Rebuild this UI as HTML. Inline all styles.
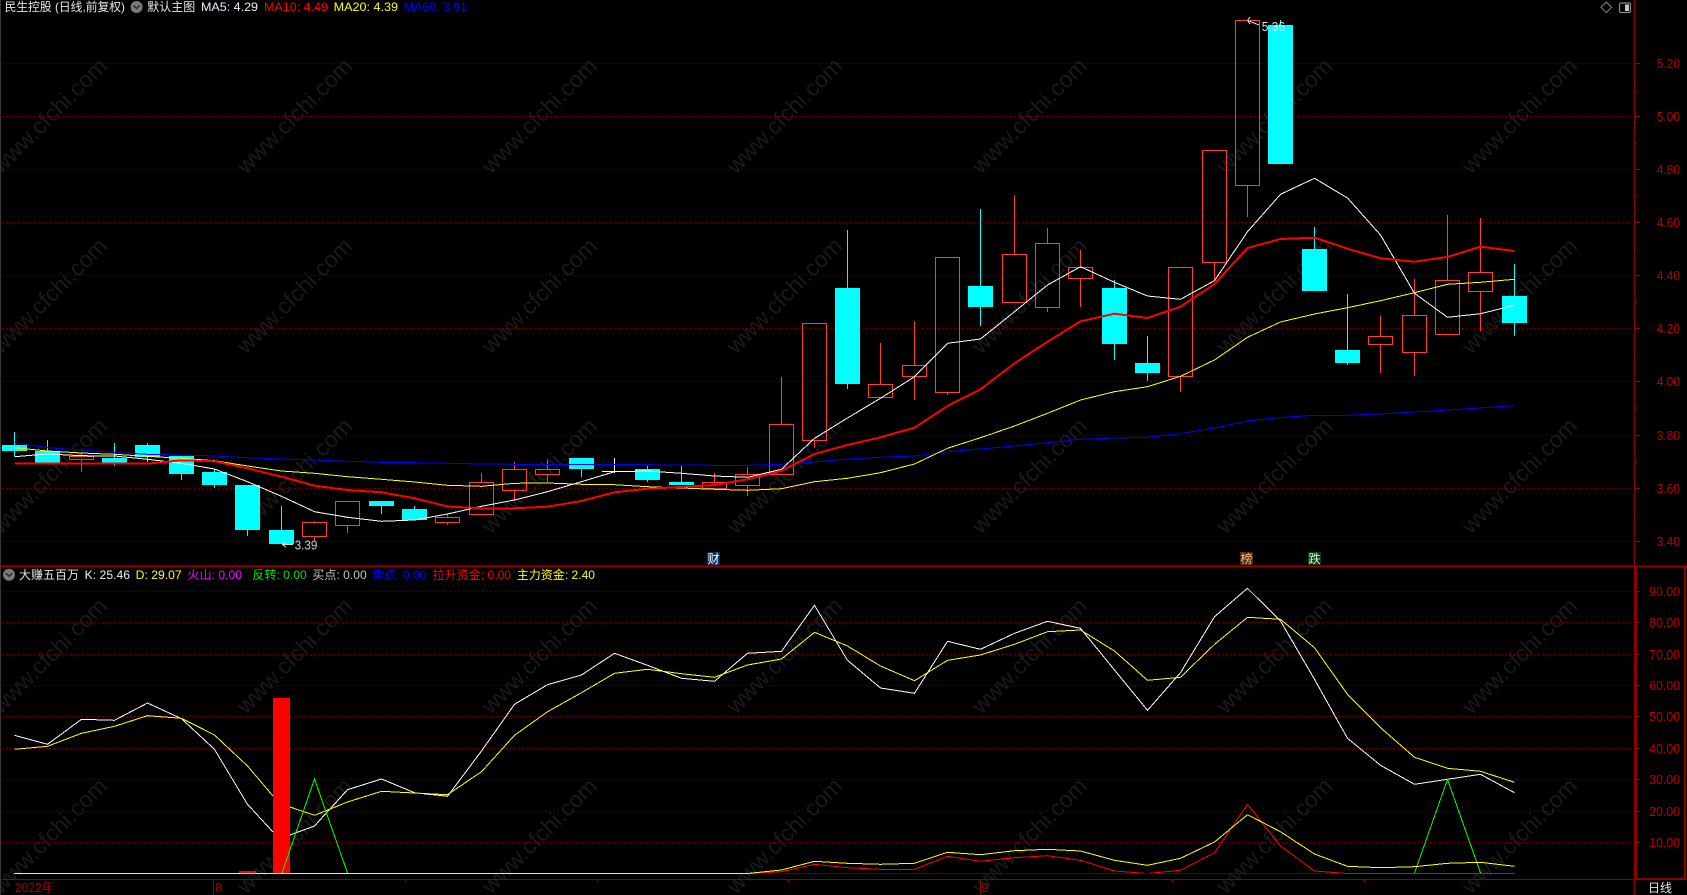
<!DOCTYPE html>
<html lang="zh-CN">
<head>
<meta charset="utf-8">
<title>民生控股</title>
<style>
html,body{margin:0;padding:0;background:#000;width:1687px;height:895px;overflow:hidden}
svg{display:block;position:absolute;left:0;top:0}
text{font-family:"Liberation Sans","Noto Sans CJK SC",sans-serif;font-size:12px}
.wm text{font-size:23px;fill:#1a1a1a}
.ax text{font-size:13px;fill:#bb0000}
</style>
</head>
<body>
<svg width="1687" height="895" viewBox="0 0 1687 895" xmlns="http://www.w3.org/2000/svg">
<rect width="1687" height="895" fill="#000"/>
<!-- watermark -->
<g class="wm">
<text transform="translate(1,175) rotate(-45)">www.cfchi.com</text>
<text transform="translate(246,175) rotate(-45)">www.cfchi.com</text>
<text transform="translate(491,175) rotate(-45)">www.cfchi.com</text>
<text transform="translate(736,175) rotate(-45)">www.cfchi.com</text>
<text transform="translate(981,175) rotate(-45)">www.cfchi.com</text>
<text transform="translate(1226,175) rotate(-45)">www.cfchi.com</text>
<text transform="translate(1471,175) rotate(-45)">www.cfchi.com</text>
<text transform="translate(1,355) rotate(-45)">www.cfchi.com</text>
<text transform="translate(246,355) rotate(-45)">www.cfchi.com</text>
<text transform="translate(491,355) rotate(-45)">www.cfchi.com</text>
<text transform="translate(736,355) rotate(-45)">www.cfchi.com</text>
<text transform="translate(981,355) rotate(-45)">www.cfchi.com</text>
<text transform="translate(1226,355) rotate(-45)">www.cfchi.com</text>
<text transform="translate(1471,355) rotate(-45)">www.cfchi.com</text>
<text transform="translate(1,535) rotate(-45)">www.cfchi.com</text>
<text transform="translate(246,535) rotate(-45)">www.cfchi.com</text>
<text transform="translate(491,535) rotate(-45)">www.cfchi.com</text>
<text transform="translate(736,535) rotate(-45)">www.cfchi.com</text>
<text transform="translate(981,535) rotate(-45)">www.cfchi.com</text>
<text transform="translate(1226,535) rotate(-45)">www.cfchi.com</text>
<text transform="translate(1471,535) rotate(-45)">www.cfchi.com</text>
<text transform="translate(1,715) rotate(-45)">www.cfchi.com</text>
<text transform="translate(246,715) rotate(-45)">www.cfchi.com</text>
<text transform="translate(491,715) rotate(-45)">www.cfchi.com</text>
<text transform="translate(736,715) rotate(-45)">www.cfchi.com</text>
<text transform="translate(981,715) rotate(-45)">www.cfchi.com</text>
<text transform="translate(1226,715) rotate(-45)">www.cfchi.com</text>
<text transform="translate(1471,715) rotate(-45)">www.cfchi.com</text>
<text transform="translate(1,895) rotate(-45)">www.cfchi.com</text>
<text transform="translate(246,895) rotate(-45)">www.cfchi.com</text>
<text transform="translate(491,895) rotate(-45)">www.cfchi.com</text>
<text transform="translate(736,895) rotate(-45)">www.cfchi.com</text>
<text transform="translate(981,895) rotate(-45)">www.cfchi.com</text>
<text transform="translate(1226,895) rotate(-45)">www.cfchi.com</text>
<text transform="translate(1471,895) rotate(-45)">www.cfchi.com</text>
</g>
<g shape-rendering="crispEdges">
<!-- grid -->
<path fill="none" stroke="#800000" stroke-width="1" stroke-dasharray="1 3" d="M2 63.5H1634M2 116.5H1634M2 169.5H1634M2 222.5H1634M2 275.5H1634M2 328.5H1634M2 381.5H1634M2 435.5H1634M2 488.5H1634M2 541.5H1634M2 591.5H1634M2 622.5H1634M2 654.5H1634M2 685.5H1634M2 716.5H1634M2 748.5H1634M2 779.5H1634M2 811.5H1634M2 842.5H1634"/>
<!-- frame -->
<rect x="0" y="0" width="1" height="895" fill="#3a3a3a"/>
<path fill="none" stroke="#8f0000" stroke-width="1" d="M1634.5 0V895M0 879.5H1687"/>
<rect x="0" y="565.5" width="1687" height="1.6" fill="#a00000"/>
<rect x="1636" y="566.5" width="49" height="312.5" fill="none" stroke="#8f0000" stroke-width="2"/>
<path fill="none" stroke="#8f0000" stroke-width="1" d="M1634 63.5H1640M1634 116.5H1640M1634 169.5H1640M1634 222.5H1640M1634 275.5H1640M1634 328.5H1640M1634 381.5H1640M1634 435.5H1640M1634 488.5H1640M1634 541.5H1640M1634 37.5H1637M1634 90.5H1637M1634 143.5H1637M1634 196.5H1637M1634 249.5H1637M1634 302.5H1637M1634 355.5H1637M1634 408.5H1637M1634 462.5H1637M1634 515.5H1637M1636 591.5H1640M1636 622.5H1640M1636 654.5H1640M1636 685.5H1640M1636 716.5H1640M1636 748.5H1640M1636 779.5H1640M1636 811.5H1640M1636 842.5H1640M1636 607.5H1638M1636 638.5H1638M1636 670.5H1638M1636 701.5H1638M1636 732.5H1638M1636 764.5H1638M1636 795.5H1638M1636 827.5H1638M1636 858.5H1638M213.5 879V895M980.5 879V895M405.5 879V882M597.5 879V882M788.5 879V882M1172.5 879V882M1364.5 879V882"/>
<!-- cyan wicks -->
<path fill="none" stroke="#00ffff" stroke-width="1" d="M14.5 432V445M14.5 451V456M47.5 440V451M114.5 443V458M114.5 463V466M147.5 443V445M147.5 457V462M181.5 474V480M214.5 469V472M214.5 485V488M247.5 530V536M281.5 506V530M381.5 506V514M414.5 506V509M581.5 469V477M647.5 466V469M647.5 480V482M681.5 466V482M847.5 230V288M847.5 384V389M980.5 209V286M980.5 307V326M1114.5 280V288M1114.5 344V360M1147.5 336V363M1147.5 373V381M1280.5 20V25M1314.5 227V249M1347.5 294V350M1347.5 363V365M1514.5 264V296M1514.5 323V336"/>
<!-- cyan bodies -->
<g fill="#00ffff">
<rect x="2" y="445" width="25" height="6"/>
<rect x="35" y="451" width="25" height="12"/>
<rect x="102" y="458" width="25" height="5"/>
<rect x="135" y="445" width="25" height="12"/>
<rect x="169" y="456" width="25" height="18"/>
<rect x="202" y="472" width="25" height="13"/>
<rect x="235" y="485" width="25" height="45"/>
<rect x="269" y="530" width="25" height="14"/>
<rect x="369" y="501" width="25" height="5"/>
<rect x="402" y="509" width="25" height="11"/>
<rect x="569" y="458" width="25" height="11"/>
<rect x="635" y="469" width="25" height="11"/>
<rect x="669" y="482" width="25" height="3"/>
<rect x="835" y="288" width="25" height="96"/>
<rect x="968" y="286" width="25" height="21"/>
<rect x="1102" y="288" width="25" height="56"/>
<rect x="1135" y="363" width="25" height="10"/>
<rect x="1268" y="25" width="25" height="139"/>
<rect x="1302" y="249" width="25" height="42"/>
<rect x="1335" y="350" width="25" height="13"/>
<rect x="1502" y="296" width="25" height="27"/>
</g>
<!-- red wicks -->
<path fill="none" stroke="#ff3c3c" stroke-width="1" d="M81.5 453V456M81.5 460V472M314.5 521V522M314.5 537V541M347.5 526V533M447.5 514V517M447.5 523V525M481.5 473V482M514.5 462V469M514.5 491V501M547.5 459V469M547.5 475V482M714.5 473V482M747.5 467V474M747.5 486V496M781.5 377V424M814.5 441V448M880.5 343V384M914.5 321V365M914.5 377V400M947.5 393V395M1014.5 195V254M1047.5 228V243M1047.5 308V312M1080.5 250V267M1080.5 279V307M1180.5 377V392M1214.5 263V281M1247.5 186V217M1380.5 316V336M1380.5 345V373M1414.5 279V315M1414.5 353V376M1447.5 215V280M1480.5 218V272M1480.5 292V331"/>
<!-- red bodies -->
<g fill="none" stroke="#ff3c3c" stroke-width="1">
<rect x="69.5" y="456.5" width="24" height="3"/>
<rect x="302.5" y="522.5" width="24" height="14"/>
<rect x="335.5" y="501.5" width="24" height="24"/>
<rect x="435.5" y="517.5" width="24" height="5"/>
<rect x="469.5" y="482.5" width="24" height="32"/>
<rect x="502.5" y="469.5" width="24" height="21"/>
<rect x="535.5" y="469.5" width="24" height="5"/>
<rect x="702.5" y="482.5" width="24" height="6"/>
<rect x="735.5" y="474.5" width="24" height="11"/>
<rect x="769.5" y="424.5" width="24" height="50"/>
<rect x="802.5" y="323.5" width="24" height="117"/>
<rect x="868.5" y="384.5" width="24" height="13"/>
<rect x="902.5" y="365.5" width="24" height="11"/>
<rect x="935.5" y="257.5" width="24" height="135"/>
<rect x="1002.5" y="254.5" width="24" height="48"/>
<rect x="1035.5" y="243.5" width="24" height="64"/>
<rect x="1068.5" y="267.5" width="24" height="11"/>
<rect x="1168.5" y="267.5" width="24" height="109"/>
<rect x="1202.5" y="150.5" width="24" height="112"/>
<rect x="1235.5" y="20.5" width="24" height="165"/>
<rect x="1368.5" y="336.5" width="24" height="8"/>
<rect x="1402.5" y="315.5" width="24" height="37"/>
<rect x="1435.5" y="280.5" width="24" height="54"/>
<rect x="1468.5" y="272.5" width="24" height="19"/>
</g>
<!-- doji -->
<path fill="none" stroke="#ffffff" stroke-width="1" d="M614.5 458V473M602 471.5H627"/>
<!-- MA lines -->
<polyline fill="none" stroke="#0000ff" stroke-width="1" points="14.5,442.7 47.5,447.7 81.5,450 114.5,452.3 147.5,454.3 181.5,455 214.5,456 247.5,457.7 281.5,459 314.5,460 347.5,461.3 381.5,462.3 414.5,462.7 447.5,463.3 481.5,464 514.5,464.3 547.5,464.3 581.5,464.3 614.5,464.3 647.5,464.7 681.5,465 714.5,465.3 747.5,465.3 781.5,464.3 814.5,462 847.5,459 880.5,457.3 914.5,456 947.5,451.7 980.5,449 1014.5,446 1047.5,442.7 1080.5,439.3 1114.5,438 1147.5,437.3 1180.5,433.6 1214.5,428 1247.5,421 1280.5,417.5 1314.5,415.3 1347.5,415.3 1380.5,414 1414.5,412 1447.5,410 1480.5,408 1514.5,405.6"/>
<polyline fill="none" stroke="#ffff00" stroke-width="1" points="14.5,447.7 47.5,451 81.5,453 114.5,454.3 147.5,456.3 181.5,458.3 214.5,460.7 247.5,466 281.5,471 314.5,473.3 347.5,476.7 381.5,479.3 414.5,482 447.5,485.3 481.5,486.3 514.5,483.3 547.5,483 581.5,484.3 614.5,484.7 647.5,486.7 681.5,488 714.5,489.3 747.5,490.3 781.5,488.7 814.5,481.7 847.5,478.3 880.5,472.7 914.5,464 947.5,448.3 980.5,437.7 1014.5,426 1047.5,413.3 1080.5,400 1114.5,391.7 1147.5,386.7 1180.5,376.3 1214.5,360 1247.5,337.3 1280.5,322 1314.5,314 1347.5,307.7 1380.5,300.7 1414.5,292.7 1447.5,284.3 1480.5,282.3 1514.5,279.3"/>
<polyline fill="none" stroke="#ffffff" stroke-width="1" points="14.5,456.7 47.5,454 81.5,455.7 114.5,456 147.5,459.3 181.5,463.3 214.5,469 247.5,481.7 281.5,496.3 314.5,511.7 347.5,517.3 381.5,521.3 414.5,520 447.5,514 481.5,506.3 514.5,500 547.5,491.7 581.5,481.7 614.5,471.7 647.5,471 681.5,473.3 714.5,476 747.5,477.3 781.5,469.3 814.5,438.3 847.5,418 880.5,398.3 914.5,376.7 947.5,343.3 980.5,339 1014.5,311.7 1047.5,285 1080.5,266.7 1114.5,282.3 1147.5,296 1180.5,299.3 1214.5,280.7 1247.5,231.7 1280.5,194.3 1314.5,178.3 1347.5,198 1380.5,235 1414.5,293.3 1447.5,317.3 1480.5,313.7 1514.5,305.3"/>
<polyline fill="none" stroke="#ff0000" stroke-width="2" points="14.5,463.7 147.5,463.7 181.5,460.3 214.5,461.3 247.5,468.3 281.5,476.7 314.5,485.7 347.5,490 381.5,492.3 414.5,498.3 447.5,506.5 481.5,508.3 514.5,508.3 547.5,506.7 581.5,501 614.5,492.3 647.5,488.7 681.5,487 714.5,485 747.5,479.3 781.5,470.7 814.5,454 847.5,445 880.5,437.3 914.5,427.7 947.5,406 980.5,389.3 1014.5,363.3 1047.5,341.7 1080.5,321.3 1114.5,313.7 1147.5,318 1180.5,306.7 1214.5,284 1247.5,248 1280.5,239 1314.5,237.7 1347.5,248.7 1380.5,258.3 1414.5,261.7 1447.5,257 1480.5,246.7 1514.5,251"/>
<!-- lower panel -->
<rect x="239" y="871" width="17" height="2" fill="#ff0000"/>
<rect x="273" y="698" width="17" height="175" fill="#ff0000"/>
<polyline fill="none" stroke="#ff0000" stroke-width="1" points="700,873.5 747.5,873.5 781.5,871.7 814.5,864.3 847.5,867.7 880.5,869.3 914.5,869.3 947.5,856.3 980.5,861.3 1014.5,857.7 1047.5,855.7 1080.5,860.3 1114.5,871 1147.5,873.5 1180.5,870.3 1214.5,852.7 1247.5,804.3 1280.5,846 1314.5,871 1347.5,873.5 1514.5,873.5"/>
<path fill="none" stroke="#0000ff" stroke-width="1" d="M783 873.5H1340"/>
<polyline fill="none" stroke="#ffffff" stroke-width="1" points="14.5,735.3 47.5,744.3 81.5,719.3 114.5,720.3 147.5,703 181.5,718.7 214.5,749.3 247.5,804.3 273,832"/>
<polyline fill="none" stroke="#ffffff" stroke-width="1" points="290,835 314.5,826 347.5,789.7 381.5,779 414.5,792.7 447.5,796.3 481.5,751 514.5,704.3 547.5,684.7 581.5,675 614.5,653.3 647.5,665.3 681.5,678.3 714.5,681.3 747.5,653.3 781.5,651.3 814.5,605.3 847.5,660.3 880.5,688 914.5,693.3 947.5,641.3 980.5,649.3 1014.5,633.3 1047.5,621.3 1080.5,628.3 1114.5,670 1147.5,710.3 1180.5,672.7 1214.5,616.7 1247.5,588.3 1280.5,621 1314.5,679.3 1347.5,738.3 1380.5,765.3 1414.5,784.3 1447.5,779.3 1480.5,774.3 1514.5,792.7"/>
<polyline fill="none" stroke="#ffff00" stroke-width="1" points="14.5,749.3 47.5,746.3 81.5,733.3 114.5,726.3 147.5,715.7 181.5,718.3 214.5,735 247.5,766 273,796"/>
<polyline fill="none" stroke="#ffff00" stroke-width="1" points="290,807 314.5,815.3 347.5,802 381.5,791.3 414.5,793 447.5,794.7 481.5,771.7 514.5,735.3 547.5,711.7 581.5,692.7 614.5,673.3 647.5,669.3 681.5,673.7 714.5,677.3 747.5,665 781.5,659 814.5,632.3 847.5,646 880.5,666 914.5,680.7 947.5,660.3 980.5,655 1014.5,644.3 1047.5,631.7 1080.5,630 1114.5,651 1147.5,680.3 1180.5,677.3 1214.5,644.3 1247.5,617.3 1280.5,619.3 1314.5,647.7 1347.5,694.3 1380.5,727.7 1414.5,757.3 1447.5,768.3 1480.5,771.3 1514.5,782.3"/>
<polyline fill="none" stroke="#00ff00" stroke-width="1" points="282,873 314.5,779 347.5,873"/>
<polyline fill="none" stroke="#00ff00" stroke-width="1" points="1414.5,873 1447.5,779.3 1480.5,873"/>
<polyline fill="none" stroke="#ffff00" stroke-width="1" points="14,873.5 747.5,873.5 781.5,870 814.5,861.3 847.5,863.3 880.5,864.3 914.5,863.3 947.5,852.3 980.5,854.7 1014.5,850.7 1047.5,849.3 1080.5,851 1114.5,860.3 1147.5,865.3 1180.5,858.3 1214.5,842 1247.5,814.7 1280.5,831.7 1314.5,854 1347.5,866.3 1380.5,867.7 1414.5,866.7 1447.5,863.3 1480.5,862.3 1514.5,866.3"/>
<!-- price markers -->
<path fill="none" stroke="#e0e0e0" stroke-width="1" d="M282 544.5H293M282 544.5L286 542M282 544.5L286 547"/>
<path fill="none" stroke="#e0e0e0" stroke-width="1" d="M1247.5 20.5L1259 25M1247.5 20.5L1250 17M1247.5 20.5L1250 24"/>
</g>
<text x="294.7" y="549.5" textLength="22.6" lengthAdjust="spacingAndGlyphs" fill="#c8d0d8" style="font-size:13px">3.39</text>
<text x="1261.7" y="31" textLength="23.3" lengthAdjust="spacingAndGlyphs" fill="#d8e8f0" style="font-size:13px">5.36</text>
<!-- badges -->
<rect x="707" y="552" width="13" height="13" fill="#0c2f5e"/>
<text x="707.5" y="563" fill="#ffffff">财</text>
<rect x="1240" y="552" width="13" height="13" fill="#4a2a10"/>
<text x="1240.5" y="563" fill="#ffc080">榜</text>
<rect x="1308" y="552" width="13" height="13" fill="#0c3a14"/>
<text x="1308.5" y="563" fill="#c8ffc8">跌</text>
<!-- header main -->
<text x="4.6" y="11" textLength="120.4" lengthAdjust="spacingAndGlyphs" fill="#e6e6e6">民生控股 (日线,前复权)</text>
<circle cx="136.6" cy="7" r="6" fill="#7a7a7a"/>
<path d="M133.5 5.5L136.6 8.5L139.7 5.5" fill="none" stroke="#222" stroke-width="1.3"/>
<text x="147.3" y="11" textLength="48" fill="#e6e6e6">默认主图</text>
<text x="201" y="11" textLength="57" lengthAdjust="spacingAndGlyphs" fill="#e8f0f8">MA5: 4.29</text>
<text x="264" y="11" textLength="64" lengthAdjust="spacingAndGlyphs" fill="#ff0000">MA10: 4.49</text>
<text x="333.7" y="11" textLength="64.3" lengthAdjust="spacingAndGlyphs" fill="#ffff00">MA20: 4.39</text>
<text x="403.7" y="11" textLength="63.3" lengthAdjust="spacingAndGlyphs" fill="#0000ff">MA60: 3.91</text>
<!-- top right icons -->
<path d="M1606.3 2L1611.5 7.3L1606.3 12.6L1601 7.3Z" fill="none" stroke="#8a8a8a" stroke-width="1"/>
<rect x="1619.5" y="3" width="11" height="9.5" rx="1.5" fill="none" stroke="#8a8a8a" stroke-width="1.2"/>
<rect x="1625" y="4.5" width="4" height="6.5" fill="#c8c8c8"/>
<!-- header lower -->
<circle cx="9" cy="574.7" r="6" fill="#7a7a7a"/>
<path d="M5.9 573.2L9 576.2L12.1 573.2" fill="none" stroke="#222" stroke-width="1.3"/>
<text x="19" y="579" textLength="60" fill="#e6e6e6">大赚五百万</text>
<text x="84.7" y="579" textLength="45.3" lengthAdjust="spacingAndGlyphs" fill="#e8f0f8">K: 25.46</text>
<text x="135.7" y="579" textLength="46" lengthAdjust="spacingAndGlyphs" fill="#ffff00">D: 29.07</text>
<text x="187.3" y="579" textLength="54.7" lengthAdjust="spacingAndGlyphs" fill="#ff00ff">火山: 0.00</text>
<text x="252.3" y="579" textLength="54.4" lengthAdjust="spacingAndGlyphs" fill="#00e000">反转: 0.00</text>
<text x="312.3" y="579" textLength="54.4" lengthAdjust="spacingAndGlyphs" fill="#c0c0c0">买点: 0.00</text>
<text x="372" y="579" textLength="54.3" lengthAdjust="spacingAndGlyphs" fill="#0000ff">卖点: 0.00</text>
<text x="432.7" y="579" textLength="78.3" lengthAdjust="spacingAndGlyphs" fill="#ff0000">拉升资金: 0.00</text>
<text x="516.7" y="579" textLength="78.3" lengthAdjust="spacingAndGlyphs" fill="#ffff00">主力资金: 2.40</text>
<!-- axis labels -->
<g class="ax">
<text x="1656.7" y="68" textLength="23.3" lengthAdjust="spacingAndGlyphs">5.20</text>
<text x="1656.7" y="121" textLength="23.3" lengthAdjust="spacingAndGlyphs">5.00</text>
<text x="1656.7" y="174" textLength="23.3" lengthAdjust="spacingAndGlyphs">4.80</text>
<text x="1656.7" y="227" textLength="23.3" lengthAdjust="spacingAndGlyphs">4.60</text>
<text x="1656.7" y="280" textLength="23.3" lengthAdjust="spacingAndGlyphs">4.40</text>
<text x="1656.7" y="333" textLength="23.3" lengthAdjust="spacingAndGlyphs">4.20</text>
<text x="1656.7" y="386" textLength="23.3" lengthAdjust="spacingAndGlyphs">4.00</text>
<text x="1656.7" y="440" textLength="23.3" lengthAdjust="spacingAndGlyphs">3.80</text>
<text x="1656.7" y="493" textLength="23.3" lengthAdjust="spacingAndGlyphs">3.60</text>
<text x="1656.7" y="546" textLength="23.3" lengthAdjust="spacingAndGlyphs">3.40</text>
<text x="1649.3" y="596" textLength="30.7" lengthAdjust="spacingAndGlyphs">90.00</text>
<text x="1649.3" y="627" textLength="30.7" lengthAdjust="spacingAndGlyphs">80.00</text>
<text x="1649.3" y="659" textLength="30.7" lengthAdjust="spacingAndGlyphs">70.00</text>
<text x="1649.3" y="690" textLength="30.7" lengthAdjust="spacingAndGlyphs">60.00</text>
<text x="1649.3" y="721" textLength="30.7" lengthAdjust="spacingAndGlyphs">50.00</text>
<text x="1649.3" y="753" textLength="30.7" lengthAdjust="spacingAndGlyphs">40.00</text>
<text x="1649.3" y="784" textLength="30.7" lengthAdjust="spacingAndGlyphs">30.00</text>
<text x="1649.3" y="816" textLength="30.7" lengthAdjust="spacingAndGlyphs">20.00</text>
<text x="1649.3" y="847" textLength="30.7" lengthAdjust="spacingAndGlyphs">10.00</text>
<text x="14.7" y="892" textLength="39.3" lengthAdjust="spacingAndGlyphs" style="fill:#a00000">2022年</text>
<text x="215" y="892" style="fill:#a00000">8</text>
<text x="981.5" y="892" style="fill:#a00000">9</text>
</g>
<text x="1648" y="892" textLength="24" fill="#e6e6e6">日线</text>
</svg>
</body>
</html>
